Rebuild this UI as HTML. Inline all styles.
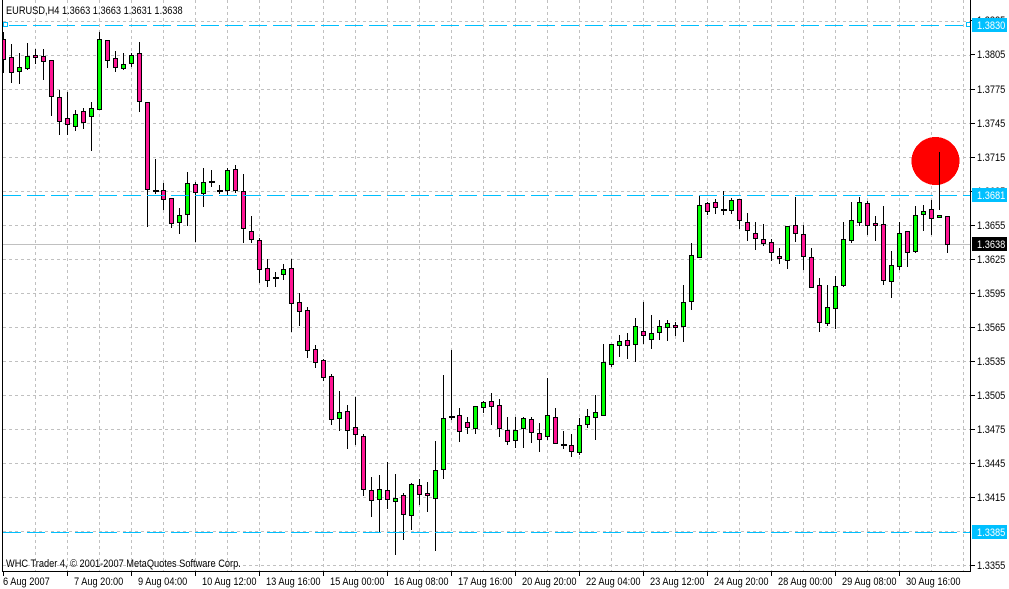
<!DOCTYPE html>
<html><head><meta charset="utf-8"><style>
html,body{margin:0;padding:0;background:#fff;width:1009px;height:589px;overflow:hidden}
svg{display:block}
text{font-family:"Liberation Sans",sans-serif;font-size:11px}
</style></head><body>
<svg id="s" width="1009" height="589" xmlns="http://www.w3.org/2000/svg" shape-rendering="crispEdges">
<g id="grid" stroke="#c0c0c0" stroke-dasharray="3,3" stroke-width="1"></g>
<line x1="3" y1="244.5" x2="970" y2="244.5" stroke="#c0c0c0"/>
<clipPath id="cp"><rect x="3" y="0" width="967" height="571"/></clipPath>
<g id="c" clip-path="url(#cp)"></g>
<g id="cy" stroke="#00c0ff" stroke-width="1"></g>
<rect x="3.5" y="22.5" width="4" height="4" fill="#fff" stroke="#00c0ff"/>
<rect x="966.5" y="22.5" width="4" height="4" fill="#fff" stroke="#00c0ff"/>
<circle cx="935.5" cy="161" r="24" fill="#ff0000"/>
<line x1="939.5" y1="152" x2="939.5" y2="210" stroke="#000"/>
<line x1="2.5" y1="0" x2="2.5" y2="572" stroke="#000"/>
<line x1="970.5" y1="0" x2="970.5" y2="572" stroke="#000"/>
<line x1="2" y1="571.5" x2="971" y2="571.5" stroke="#000"/>
<g id="ax"></g>
<text class="sc" x="6" y="14" fill="#000">EURUSD,H4  1.3663 1.3663 1.3631 1.3638</text>
<text class="sc" x="6" y="567" fill="#000">WHC Trader 4, © 2001-2007 MetaQuotes Software Corp.</text>
</svg>
<script>
var NS="http://www.w3.org/2000/svg";
function el(p,t,a,tx){var e=document.createElementNS(NS,t);for(var k in a)e.setAttribute(k,a[k]);if(tx!=null)e.textContent=tx;p.appendChild(e);return e;}
var g=document.getElementById('grid');
for(var y=21;y<571;y+=34)el(g,'line',{x1:3,y1:y+.5,x2:970,y2:y+.5});
for(var x=35;x<970;x+=32)el(g,'line',{x1:x+.5,y1:0,x2:x+.5,y2:571});
var cy=document.getElementById('cy');
[[25,9,966],[195,3,970],[532,3,970]].forEach(function(a){
 for(var x=a[1];x<a[2];x+=24){el(cy,'line',{x1:x,y1:a[0]+.5,x2:Math.min(x+18,a[2]),y2:a[0]+.5});}
});
var D=[[39,59,32,72],[57,72,44,82],[71,67,53,83],[68,56,43,69],[55,57,49,63],[56,61,49,79],[60,96,60,115],[97,121,90,134],[118,124,92,134],[126,114,110,130],[111,122,108,128],[116,108,102,150],[109,39,32,109],[40,60,40,67],[58,67,51,71],[68,64,53,69],[63,55,53,66],[53,101,42,111],[102,189,102,226],[190,190,159,193],[190,199,183,209],
[198,223,198,227],[222,215,208,233],[214,183,172,225],[184,192,182,241],[193,182,168,206],[181,181,170,186],[190,190,185,193],[190,170,168,194],[169,190,165,192],[191,228,174,242],[231,239,216,242],[240,269,238,282],[268,280,259,286],[277,277,272,286],[274,269,264,279],[268,303,259,331],[302,311,293,325],[310,350,307,357],[349,362,345,367],[360,377,359,380],
[376,419,374,424],[418,412,391,430],[411,430,405,448],[427,434,397,444],[436,489,434,495],[490,500,477,516],[499,489,475,532],[490,499,462,508],[501,498,474,554],[495,514,493,539],[515,484,483,529],[485,494,479,504],[493,495,482,511],[498,470,441,550],[469,418,375,478],[416,416,350,419],[415,431,408,441],[422,427,417,433],[428,406,406,433],[407,402,401,412],
[401,406,393,424],[405,428,399,436],[430,441,417,444],[440,430,417,447],[428,418,417,447],[419,432,417,442],[433,439,423,451],[436,415,378,439],[417,443,408,443],[444,444,431,448],[445,451,434,456],[452,425,418,454],[424,416,409,427],[417,412,395,439],[415,362,344,415],[364,344,344,366],[345,341,335,356],[340,345,333,358],[344,326,318,361],[331,335,302,343],
[339,333,315,348],[332,326,320,339],[327,323,320,340],[325,327,322,335],[326,302,285,341],[301,255,243,309],[257,205,195,257],[203,211,202,214],[202,207,199,213],[209,209,191,214],[210,200,198,213],[199,220,199,228],[222,230,213,240],[233,238,222,249],[239,243,224,245],[242,252,239,260],[256,258,248,263],[260,226,226,268],[225,233,197,241],[234,256,225,269],
[257,287,248,287],[285,322,278,331],[323,307,285,325],[308,286,276,328],[285,239,222,286],[240,220,202,242],[222,202,197,225],[203,225,201,234],[223,225,216,240],[224,280,206,284],[281,265,251,297],[266,233,222,269],[231,252,231,266],[251,215,206,252],[214,211,205,230],[209,218,200,234],[217,215,152,225],[216,244,216,252]];
var c=document.getElementById('c');
D.forEach(function(d,k){
 var o=d[0],cl=d[1],h=d[2],l=d[3],wx=8*k+3.5,bx=8*k+1.5;
 var t=Math.min(o,cl),b=Math.max(o,cl);
 if(k!==117)el(c,'line',{x1:wx,y1:h,x2:wx,y2:l+1,stroke:'#000'});
 if(b-t<2){el(c,'rect',{x:bx-.5,y:t,width:6,height:2,fill:'#000'});}
 else el(c,'rect',{x:bx,y:t+.5,width:4,height:b-t,fill:cl<o?'#00ff00':'#ff1493',stroke:'#000'});
});
var ax=document.getElementById('ax');
var P=[[1.3835,20],[1.3805,54],[1.3775,89],[1.3745,123],[1.3715,157],[1.3685,191],[1.3655,225],[1.3625,259],[1.3595,293],[1.3565,327],[1.3535,361],[1.3505,395],[1.3475,429],[1.3445,463],[1.3415,497],[1.3355,565]];
P.forEach(function(p){el(ax,'line',{x1:971,y1:p[1]+.5,x2:975,y2:p[1]+.5,stroke:'#000'});el(ax,'text',{'class':'sc',x:977,y:p[1]+4,fill:'#000'},p[0].toFixed(4));});
[[1.3830,25,'#00c0ff','#fff'],[1.3681,195,'#00c0ff','#fff'],[1.3385,532,'#00c0ff','#fff'],[1.3638,244,'#000','#fff']].forEach(function(p){
 el(ax,'rect',{x:972,y:p[1]-7,width:35,height:14,fill:p[2]});
 el(ax,'text',{'class':'sc',x:977,y:p[1]+4,fill:p[3]},p[0].toFixed(4));});
var L=['6 Aug 2007','7 Aug 20:00','9 Aug 04:00','10 Aug 12:00','13 Aug 16:00','15 Aug 00:00','16 Aug 08:00','17 Aug 16:00','20 Aug 20:00','22 Aug 04:00','23 Aug 12:00','24 Aug 20:00','28 Aug 00:00','29 Aug 08:00','30 Aug 16:00'];
L.forEach(function(s,i){var x=3+64*i;el(ax,'line',{x1:x+.5,y1:572,x2:x+.5,y2:576,stroke:'#000'});el(ax,'text',{'class':'sc',x:i?x+7:x,y:585,fill:'#000'},s);});
document.querySelectorAll('text.sc').forEach(function(t){
 var w=t.getComputedTextLength();
 t.setAttribute('textLength',(w*0.84).toFixed(1));
 t.setAttribute('lengthAdjust','spacingAndGlyphs');
});
</script>
</body></html>
